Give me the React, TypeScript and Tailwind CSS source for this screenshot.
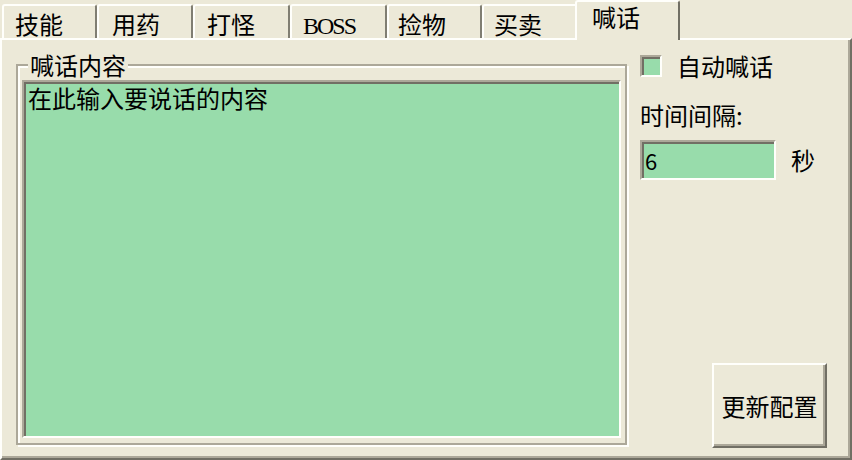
import React from "react";

const green = "bg-[#98dcab]";

const tabs = [
  { label: "技能", w: "w-[95px]", pl: "pl-[11px]" },
  { label: "用药", w: "w-[96px]", pl: "pl-[13px]" },
  { label: "打怪", w: "w-[97px]", pl: "pl-[12px]" },
  { label: "BOSS", w: "w-[97px]", pl: "pl-[11px]", latin: true },
  { label: "捡物", w: "w-[95px]", pl: "pl-[9px]" },
  { label: "买卖", w: "w-[96px]", pl: "pl-[10px]" },
];

function Tab({ label, w, pl, latin }: { label: string; w: string; pl: string; latin?: boolean }) {
  return (
    <div
      className={`${w} ${pl} h-[34px] shrink-0 rounded-t-[3px] border-t-2 border-l-2 border-r-2 border-t-[#fffffb] border-l-[#fffffb] border-r-[#807e72] pt-[4px] leading-[28px]`}
    >
      {latin ? (
        <span className="font-['Liberation_Serif',serif] text-[24px] tracking-[-2px]">{label}</span>
      ) : (
        label
      )}
    </div>
  );
}

export default function App() {
  return (
    <div className="flex h-[460px] w-[852px] flex-col overflow-hidden bg-[#ece9d8] font-['Noto_Sans_CJK_SC',sans-serif] text-[24px] text-black">
      {/* tab strip */}
      <div className="flex h-[38px] shrink-0 items-end pl-[2px]">
        {tabs.map((t) => (
          <Tab key={t.label} {...t} />
        ))}
        <div className="relative z-10 -mb-[2px] -ml-[3px] h-[40px] w-[105px] shrink-0 rounded-t-[3px] border-l-2 border-r-2 border-t-2 border-l-[#fffffb] border-r-[#716f64] border-t-[#fffffb] bg-[#ece9d8] pl-[15px] pt-[1px] leading-[28px]">
          喊话
        </div>
      </div>

      {/* panel */}
      <div className="flex flex-1 items-start border-2 border-b-[#716f64] border-l-[#fffffb] border-r-[#716f64] border-t-[#fffffb] pl-[14px] pt-[11px] shadow-[inset_-2px_-2px_0_#aca899]">
        {/* group box */}
        <div className="relative mt-[13px] w-[611px] shrink-0 border-2 border-[#aca899] px-[4px] pb-[5px] pt-[14px] shadow-[inset_2px_2px_0_#fffffb,2px_2px_0_#fffffb]">
          <span className="absolute -top-[15px] left-[10px] bg-[#ece9d8] px-[2px] leading-[28px]">喊话内容</span>
          <textarea
            className={`block h-[358px] w-full resize-none border-2 border-b-[#fffffb] border-l-[#aca899] border-r-[#fffffb] border-t-[#aca899] ${green} px-[4px] pt-[2px] leading-[28px] outline-none shadow-[inset_2px_2px_0_#716f64]`}
            defaultValue="在此输入要说话的内容"
          />
        </div>

        {/* right column */}
        <div className="ml-[13px] mt-[1px] flex w-[187px] flex-col">
          <div className="flex h-[28px] items-center">
            <div className={`h-[22px] w-[22px] border-2 border-b-[#fffffb] border-l-[#aca899] border-r-[#fffffb] border-t-[#aca899] ${green} shadow-[inset_2px_2px_0_#716f64]`} />
            <span className="ml-[15px] leading-[28px]">自动喊话</span>
          </div>

          <div className="mt-[21px] leading-[28px]">时间间隔:</div>

          <div className="mt-[11px] flex items-center">
            <input
              className={`h-[40px] w-[136px] border-2 border-b-[#fffffb] border-l-[#aca899] border-r-[#fffffb] border-t-[#aca899] ${green} pl-[3px] text-[22px] outline-none shadow-[inset_2px_2px_0_#716f64]`}
              defaultValue="6"
            />
            <span className="ml-[15px] leading-[28px]">秒</span>
          </div>

          <button className="mt-[183px] flex h-[85px] w-[115px] items-center justify-center self-end border-2 border-b-[#716f64] border-l-[#fffffb] border-r-[#716f64] border-t-[#fffffb] bg-[#ece9d8] shadow-[inset_-2px_-2px_0_#aca899]">
            更新配置
          </button>
        </div>
      </div>
    </div>
  );
}
